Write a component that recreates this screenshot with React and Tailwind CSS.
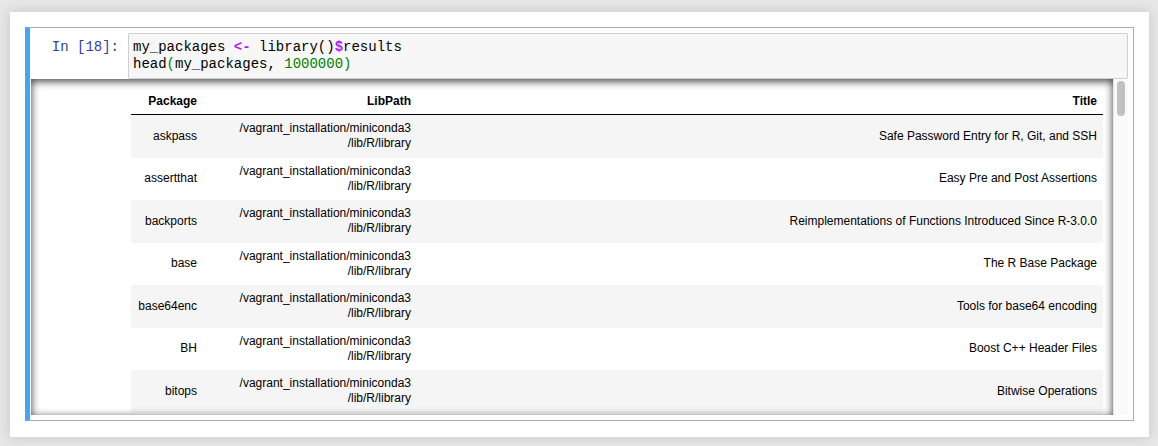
const rows = [
  ["askpass", "Safe Password Entry for R, Git, and SSH"],
  ["assertthat", "Easy Pre and Post Assertions"],
  ["backports", "Reimplementations of Functions Introduced Since R-3.0.0"],
  ["base", "The R Base Package"],
  ["base64enc", "Tools for base64 encoding"],
  ["BH", "Boost C++ Header Files"],
  ["bitops", "Bitwise Operations"],
];

const mono = "font-['Liberation_Mono','DejaVu_Sans_Mono',monospace]";

function InputCell() {
  return (
    <div className="flex">
      <div className={`w-[97px] shrink-0 pr-[9px] pt-[6px] text-right text-[14px] leading-[17px] text-[#303f9f] ${mono}`}>
        In&nbsp;[18]:
      </div>
      <div className={`w-[1000px] h-[46px] bg-[#f7f7f7] border border-[#cfcfcf] rounded-[2px] px-[4px] pt-[5px] text-[14px] leading-[17px] text-black whitespace-pre ${mono}`}>
        <div>
          my_packages <span className="text-[#aa22ff] font-bold">&lt;-</span> library()<span className="text-[#aa22ff] font-bold">$</span>results
        </div>
        <div>
          head<span className="text-[#008000]">(</span>my_packages, <span className="text-[#008000]">1000000</span><span className="text-[#008000]">)</span>
        </div>
      </div>
    </div>
  );
}

function PackageTable() {
  return (
    <table className="table-fixed border-collapse w-[972px] text-[12px] leading-[15px] text-black font-['Liberation_Sans',Arial,sans-serif]">
      <colgroup>
        <col className="w-[72px]" />
        <col className="w-[214px]" />
        <col />
      </colgroup>
      <thead>
        <tr className="border-b border-black">
          <th className="text-right font-bold px-[6px] py-[6px] leading-[13px]">Package</th>
          <th className="text-right font-bold px-[6px] py-[6px] leading-[13px]">LibPath</th>
          <th className="text-right font-bold px-[6px] py-[6px] leading-[13px]">Title</th>
        </tr>
      </thead>
      <tbody>
        {rows.map(([pkg, title], i) => (
          <tr key={pkg} className={i % 2 === 0 ? "bg-[#f5f5f5]" : "bg-white"}>
            <td className="text-right align-middle px-[6px] py-[6.25px]">{pkg}</td>
            <td className="text-right align-middle px-[6px] py-[6.25px]">
              /vagrant_installation/miniconda3
              <br />
              /lib/R/library
            </td>
            <td className="text-right align-middle px-[6px] py-[6.25px]">{title}</td>
          </tr>
        ))}
      </tbody>
    </table>
  );
}

function OutputArea() {
  return (
    <div className="flex h-[336px] w-[1097px]">
      <div className="relative flex-1 overflow-hidden">
        <div className="pl-[100px] pt-[10px]">
          <PackageTable />
        </div>
        <div className="pointer-events-none absolute inset-0 shadow-[inset_0_2px_8px_rgba(0,0,0,0.8)]" />
      </div>
      <div className="w-[15px] shrink-0 bg-[#fafafa] border-l border-[#e6e6e6] pt-[2px] pl-[3px]">
        <div className="w-[8px] h-[35px] rounded-full bg-[#c1c1c1]" />
      </div>
    </div>
  );
}

export default function App() {
  return (
    <div className="w-[1158px] h-[446px] bg-[#e8e8e8] pt-[12px] pl-[10px]">
      <div className="w-[1139px] h-[425px] bg-white p-[15px] shadow-[0_0_12px_1px_rgba(87,87,87,0.2)]">
        <div className="w-[1109px] h-[394px] border border-[#ababab] border-l-[5px] border-l-[#42a5f5] pt-[5px] pr-[5px] pl-px">
          <InputCell />
          <OutputArea />
        </div>
      </div>
    </div>
  );
}
